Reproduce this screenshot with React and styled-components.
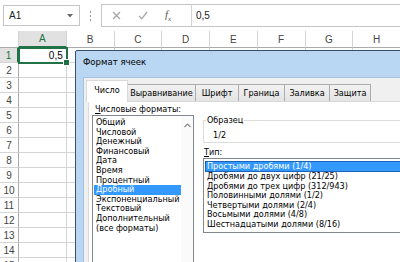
import React, { Fragment } from "react";
import styled, { createGlobalStyle, css } from "styled-components";

const GlobalStyle = createGlobalStyle`
  html, body {
    margin: 0;
    padding: 0;
    overflow: hidden;
    background: #fff;
  }
`;

const cols = ["A", "B", "C", "D", "E", "F", "G", "H"];
const rows = Array.from({ length: 15 }, (_, i) => i + 1);

const formats = [
  "Общий",
  "Числовой",
  "Денежный",
  "Финансовый",
  "Дата",
  "Время",
  "Процентный",
  "Дробный",
  "Экспоненциальный",
  "Текстовый",
  "Дополнительный",
  "(все форматы)",
];

const types = [
  "Простыми дробями (1/4)",
  "Дробями до двух цифр (21/25)",
  "Дробями до трех цифр (312/943)",
  "Половинными долями (1/2)",
  "Четвертыми долями (2/4)",
  "Восьмыми долями (4/8)",
  "Шестнадцатыми долями (8/16)",
];

const tabs = [
  { name: "Число", w: 42 },
  { name: "Выравнивание", w: 69 },
  { name: "Шрифт", w: 44 },
  { name: "Граница", w: 47 },
  { name: "Заливка", w: 46 },
  { name: "Защита", w: 42 },
];

const App = () => {
  return (
    <Screen>
      <GlobalStyle />
      <FormulaBar>
        <NameBox>
          A1
          <svg width="6" height="4" viewBox="0 0 6 4">
            <path d="M0 0 L6 0 L3 3.5 Z" fill="#6a6a6a" />
          </svg>
        </NameBox>
        <Grip>
          <span />
          <span />
          <span />
        </Grip>
        <FormulaBox>
          <Tools>
            <svg width="9" height="9" viewBox="0 0 9 9">
              <path d="M1 1 L8 8 M8 1 L1 8" stroke="#a8a8a8" strokeWidth="1.3" />
            </svg>
            <svg width="10" height="9" viewBox="0 0 10 9">
              <path d="M1 5 L3.8 7.8 L9 1" stroke="#a8a8a8" strokeWidth="1.3" fill="none" />
            </svg>
            <Fx>
              f<sub>x</sub>
            </Fx>
          </Tools>
          <Value>0,5</Value>
        </FormulaBox>
      </FormulaBar>

      <Sheet>
        <Corner />
        {cols.map((c) => (
          <ColHead key={c} $active={c === "A"}>
            {c}
          </ColHead>
        ))}
        {rows.map((r) => (
          <Fragment key={r}>
            <RowHead $active={r === 1}>{r}</RowHead>
            {cols.map((c) =>
              r === 1 && c === "A" ? (
                <Cell key={c} $selected>
                  0,5
                  <Handle />
                </Cell>
              ) : (
                <Cell key={c} />
              )
            )}
          </Fragment>
        ))}
      </Sheet>

      <Dialog>
        <TitleBar>Формат ячеек</TitleBar>
        <Body>
          <TabRow>
            {tabs.map((t, i) => (
              <Tab key={t.name} $active={i === 0} $w={t.w}>
                {t.name}
              </Tab>
            ))}
          </TabRow>
          <Panel>
            <LeftCol>
              <Label>
                <u>Ч</u>исловые форматы:
              </Label>
              <ListBox $width={102}>
                <Items>
                  {formats.map((f) => (
                    <Item key={f} $selected={f === "Дробный"}>
                      {f}
                    </Item>
                  ))}
                </Items>
                <ScrollTrack>
                  <svg width="7" height="5" viewBox="0 0 7 5">
                    <path d="M0.5 4 L3.5 1 L6.5 4" stroke="#8a8a8a" strokeWidth="1.2" fill="none" />
                  </svg>
                </ScrollTrack>
              </ListBox>
            </LeftCol>
            <RightCol>
              <Group>
                <Legend>Образец</Legend>
                <Sample>1/2</Sample>
              </Group>
              <TypeLabel>
                <u>Т</u>ип:
              </TypeLabel>
              <ListBox>
                <Items>
                  {types.map((t, i) => (
                    <Item key={t} $selected={i === 0} $focus={i === 0}>
                      {t}
                    </Item>
                  ))}
                </Items>
              </ListBox>
            </RightCol>
          </Panel>
        </Body>
      </Dialog>
    </Screen>
  );
};

const uiFont = `"DejaVu Sans Condensed", "DejaVu Sans", "Liberation Sans", sans-serif`;

const Screen = styled.div`
  position: relative;
  width: 400px;
  height: 262px;
  overflow: hidden;
  background: #fff;
  font-family: "Liberation Sans", Arial, sans-serif;
  color: #000;
`;

const FormulaBar = styled.div`
  display: flex;
  align-items: center;
  height: 31px;
  padding-left: 3px;
  box-sizing: border-box;
`;

const NameBox = styled.div`
  display: flex;
  align-items: center;
  justify-content: space-between;
  width: 77px;
  height: 21px;
  box-sizing: border-box;
  padding: 0 6px 0 5px;
  border: 1px solid #c6c6c6;
  font-size: 10px;
  color: #222;
`;

const Grip = styled.div`
  display: flex;
  flex-direction: column;
  gap: 2px;
  margin: 0 10px 0 10px;

  span {
    width: 1px;
    height: 2px;
    background: #9a9a9a;
  }
`;

const FormulaBox = styled.div`
  flex: 1;
  display: flex;
  height: 21px;
  border: 1px solid #c6c6c6;
  border-right: none;
`;

const Tools = styled.div`
  display: flex;
  align-items: center;
  width: 90px;
  padding-left: 10px;
  gap: 17px;
  border-right: 1px solid #d4d4d4;
  box-sizing: border-box;
`;

const Fx = styled.span`
  font-family: "Liberation Serif", serif;
  font-style: italic;
  font-size: 11px;
  color: #555;

  sub {
    font-size: 7px;
  }
`;

const Value = styled.div`
  display: flex;
  align-items: center;
  padding-left: 4px;
  font-size: 10px;
  color: #222;
`;

const Sheet = styled.div`
  display: grid;
  grid-template-columns: 19px repeat(8, 47.75px);
  grid-template-rows: 17px repeat(15, 15px);
`;

const Corner = styled.div`
  background: #fff;
  border-right: 1px solid #d4d4d4;
  border-bottom: 1px solid #ababab;
  box-sizing: border-box;
`;

const ColHead = styled.div`
  display: flex;
  align-items: center;
  justify-content: center;
  font-size: 10px;
  color: #444;
  background: #fff;
  border-right: 1px solid #d4d4d4;
  border-bottom: 1px solid #ababab;
  box-sizing: border-box;

  ${(p) =>
    p.$active &&
    css`
      background: #e1e1e1;
      color: #217346;
      border-bottom: 2px solid #217346;
    `}
`;

const RowHead = styled.div`
  display: flex;
  align-items: center;
  justify-content: center;
  font-size: 10px;
  color: #444;
  background: #fff;
  border-right: 1px solid #ababab;
  border-bottom: 1px solid #d4d4d4;
  box-sizing: border-box;

  ${(p) =>
    p.$active &&
    css`
      background: #e1e1e1;
      color: #217346;
      border-right: 2px solid #217346;
    `}
`;

const Cell = styled.div`
  position: relative;
  display: flex;
  align-items: center;
  justify-content: flex-end;
  padding-right: 3px;
  font-size: 10px;
  border-right: 1px solid #d4d4d4;
  border-bottom: 1px solid #d4d4d4;
  box-sizing: border-box;

  ${(p) =>
    p.$selected &&
    css`
      outline: 2px solid #217346;
      outline-offset: -1px;
      z-index: 1;
    `}
`;

const Handle = styled.span`
  position: absolute;
  right: -4px;
  bottom: -4px;
  width: 5px;
  height: 5px;
  background: #217346;
  border: 1px solid #fff;
`;

const Dialog = styled.div`
  position: absolute;
  left: 75px;
  top: 50px;
  width: 345px;
  height: 240px;
  display: flex;
  flex-direction: column;
  background: #b9d6f2;
  border: 1px solid #34506e;
  border-radius: 2px 0 0 0;
  padding: 0 7px;
  z-index: 5;
  font-family: ${uiFont};
`;

const TitleBar = styled.div`
  height: 26px;
  padding: 5px 0 0 0;
  box-sizing: border-box;
  font-size: 9.5px;
  line-height: 12px;
  color: #000;
`;

const Body = styled.div`
  flex: 1;
  background: #f0f0f0;
  border: 1px solid #a6c2de;
  padding: 1px 0 0 4px;
  display: flex;
  flex-direction: column;
`;

const TabRow = styled.div`
  display: flex;
  align-items: flex-end;
  height: 22px;
  margin-left: -2px;
  position: relative;
  z-index: 2;
`;

const Tab = styled.div`
  width: ${(p) => p.$w}px;
  height: 17px;
  box-sizing: border-box;
  display: flex;
  align-items: center;
  justify-content: center;
  font-size: 9px;
  background: linear-gradient(#f2f2f2, #e3e3e3);
  border: 1px solid #acacac;
  border-bottom: none;
  margin-left: -1px;

  ${(p) =>
    p.$active &&
    css`
      height: 22px;
      margin-left: 0;
      margin-bottom: -1px;
      padding-bottom: 3px;
      background: #fff;
      border-color: #d9d9d9;
      z-index: 1;
    `}
`;

const Panel = styled.div`
  flex: 1;
  display: flex;
  gap: 9px;
  background: #fff;
  border: 1px solid #d9d9d9;
  padding: 2px 0 0 3px;
`;

const LeftCol = styled.div`
  display: flex;
  flex-direction: column;
  width: 102px;
`;

const RightCol = styled.div`
  flex: 1;
  display: flex;
  flex-direction: column;
  padding-top: 11px;
`;

const Label = styled.div`
  font-size: 9px;
  line-height: 10px;
  padding-left: 3px;
  margin-bottom: 1px;
`;

const TypeLabel = styled(Label)`
  padding-left: 1px;
  margin-top: 4px;
`;

const ListBox = styled.div`
  display: flex;
  width: ${(p) => (p.$width ? `${p.$width}px` : "auto")};
  border: 1px solid #828790;
  border-right: ${(p) => (p.$width ? "1px solid #828790" : "none")};
  box-sizing: border-box;
  background: #fff;
  flex: ${(p) => (p.$width ? 1 : "none")};
`;

const Items = styled.div`
  flex: 1;
  padding: 2px 0 2px 1px;
`;

const Item = styled.div`
  font-size: 9px;
  line-height: 9.6px;
  padding-left: 2px;
  white-space: nowrap;

  ${(p) =>
    p.$selected &&
    css`
      background: #3399ff;
      color: #fff;
    `}

  ${(p) =>
    p.$focus &&
    css`
      box-shadow: inset 0 0 0 1px #1b62b8;
      line-height: 11px;
    `}
`;

const ScrollTrack = styled.div`
  width: 12px;
  display: flex;
  justify-content: center;
  padding-top: 7px;
  background: #fafafa;
`;

const Group = styled.fieldset`
  margin: 0;
  padding: 0 0 2px 9px;
  border: 1px solid #dcdcdc;
  border-right: none;
  min-width: 0;
`;

const Legend = styled.legend`
  font-size: 9px;
  line-height: 10px;
  padding: 0 1px;
  margin-left: -7px;
`;

const Sample = styled.div`
  font-size: 9px;
  line-height: 10px;
  margin-top: 5px;
`;

export default App;
